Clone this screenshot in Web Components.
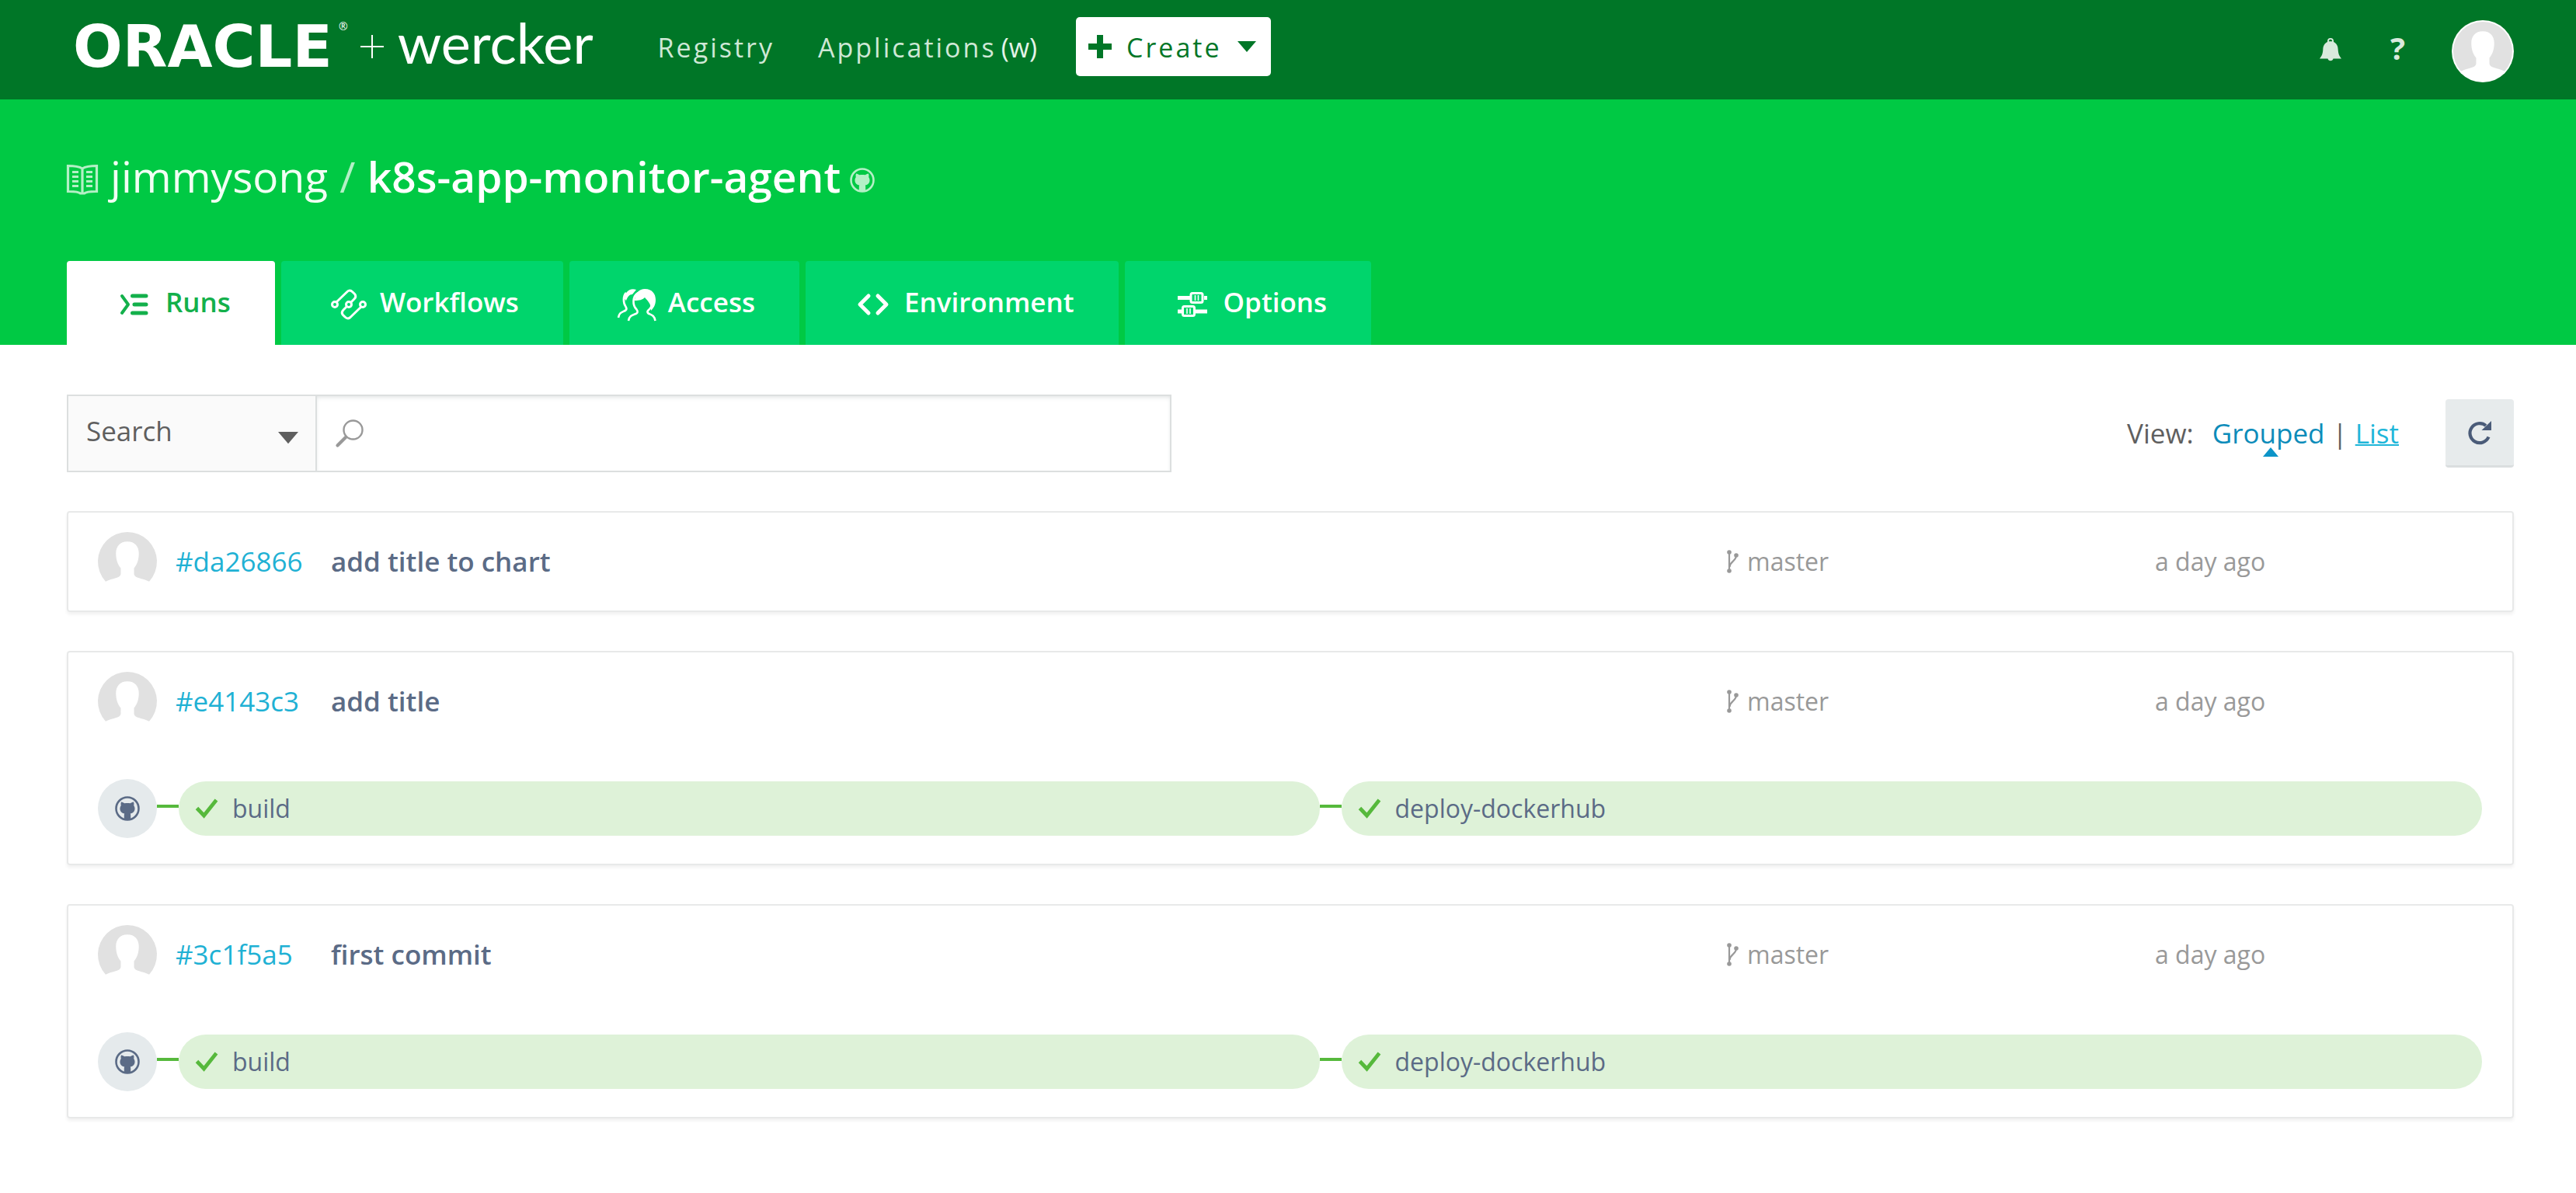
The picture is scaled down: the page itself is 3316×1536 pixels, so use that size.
<!DOCTYPE html>
<html lang="en">
<head>
<meta charset="utf-8">
<title>k8s-app-monitor-agent</title>
<style>
  body { margin: 0; background: #fff; color: #5f5f5f; font: 35px/48px "Open Sans", "Noto Sans", sans-serif; }
</style>
</head>
<body>
<wk-app></wk-app>
<script>
const define = (name, html, setup) => {
  const tpl = document.createElement('template');
  tpl.innerHTML = html;
  customElements.define(name, class extends HTMLElement {
    connectedCallback() {
      if (this.shadowRoot) return;
      const root = this.attachShadow({ mode: 'open' });
      root.append(tpl.content.cloneNode(true));
      if (setup) setup(this, root);
    }
  });
};

const ICONS = {
  plus: ['0 0 30 30', '<path fill="currentColor" d="M11 0h8v11h11v8H19v11h-8V19H0v-8h11z"/>'],
  down: ['0 0 24 14', '<path fill="currentColor" d="M0 0h24L12 14z"/>'],
  bell: ['0 0 28 30', '<path fill="currentColor" fill-rule="evenodd" d="M14 0a4 4 0 0 0-4 4v1C6 7 4.500 10 4.300 15 4 20 3 22.500 0 26.500h10.500a3.600 3.600 0 0 0 7 0H28c-3-4-4-6.500-4.300-11.500C23.500 10 22 7 18 5V4a4 4 0 0 0-4-4zm0 1.800c1.300 0 2.200 1 2.200 2.400h-4.400c0-1.400.9-2.400 2.200-2.400z"/>'],
  book: ['0 0 40 40', '<g fill="none" stroke="currentColor" stroke-width="3.200"><path d="M20 5C15 2 9 1.500 1.500 1.500v33c7 0 13-.2 16 2.500h5c3-2.700 9-2.500 16-2.500v-33C31 1.500 25 2 20 5zM20 5v32"/><path d="M7 9.500h8M7 15.500h8M7 21.500h8M7 27.500h8M25 9.500h8M25 15.500h8M25 21.500h8M25 27.500h8"/></g>'],
  github: ['0 0 32 32', '<circle cx="16" cy="16" r="14.500" fill="none" stroke="currentColor" stroke-width="2.600"/><path fill="currentColor" d="M8 7.500c1.700.2 3.200 1 4.300 1.800 2.400-.5 5-.5 7.400 0C20.800 8.500 22.300 7.700 24 7.500c.6 1.600.6 3.100.2 4.400 2.600 3.600 1.600 9.700-4.400 10.700.3.700.4 1.400.4 2.400v4.800L16 31l-4.200-1.200V25c0-1 .1-1.700.4-2.400-6-1-7-7.100-4.400-10.700-.4-1.300-.4-2.800.2-4.400z"/>'],
  runs: ['0 0 36 28', '<g fill="none" stroke="currentColor" stroke-width="5" stroke-linecap="round"><path d="M2 3l8 11-8 11" stroke-width="4" stroke-linejoin="round"/><path d="M15.500 3H33M18 14h15M15.500 25H33"/></g>'],
  flow: ['0 0 46 40', '<g fill="none" stroke="currentColor" stroke-width="3"><circle cx="5" cy="20" r="3.500"/><circle cx="23" cy="20" r="3.500"/><circle cx="41" cy="20" r="3.500"/><path stroke-linejoin="round" d="M7 17L20.500 4Q24 0 28 4l3 3q2 3-1 6l-4 4M39 23L25.500 36Q22 40 18 36l-3-3q-2-3 1-6l4-4"/></g>'],
  people: ['0 0 50 42', '<g fill="none" stroke="currentColor" stroke-width="2.600"><path d="M14 42c1-7 6-7.500 10.500-9.500 1.500-1 1.500-3 0-5-6-6-5-17 1-21 4-3 12-3 16 2 5 6 4 15-2 20-1.500 1.500-1 3 0 4 4 2 8 2.500 9 9.500"/><path d="M1 38c1-7 5-7 9.500-9.500 1.500-1 1-3-.2-5C7 19 7 10 11 6"/></g><path fill="currentColor" d="M9 14c0-8 6-15 15-12l-5 6c-4 0-6 3-8 8zM22 15c1-9 6-14 13-14 10 0 14 7 14 14s-3 11-6 14c0-10-4-12-8-17-3 3-7 4-13 4z"/>'],
  code: ['0 0 40 28', '<path fill="none" stroke="currentColor" stroke-width="5" stroke-linecap="round" stroke-linejoin="round" d="M14 3L3 14l11 11M26 3l11 11-11 11"/>'],
  sliders: ['0 0 38 32', '<g fill="none" stroke="currentColor"><path stroke-width="5" d="M0 7.500h16M34 7.500h4M0 25h6M22 25h16"/><rect x="17" y="1.500" width="15" height="12" rx="2" stroke-width="3"/><rect x="6.500" y="18.500" width="15" height="12" rx="2" stroke-width="3"/><path stroke-width="1.600" d="M22.500 4v7M26.500 4v7M12 21v7M16 21v7"/></g>'],
  search: ['0 0 36 36', '<g fill="none" stroke="currentColor"><circle cx="22.500" cy="13.500" r="12" stroke-width="2.400"/><path stroke-width="4.200" stroke-linecap="round" d="M2.500 33.500L13 23"/></g>'],
  reload: ['0 0 30 30', '<path fill="none" stroke="currentColor" stroke-width="4.200" d="M26.500 20.500A12.500 12.500 0 1 1 23 6"/><path fill="currentColor" d="M30 0v12H17.500z"/>'],
  branch: ['0 0 15 30', '<g fill="none" stroke="currentColor" stroke-width="2.200"><path d="M3 3v24M12 7c0 8-8 7-8.500 15"/></g><g fill="currentColor"><circle cx="3" cy="3" r="2.800"/><circle cx="3" cy="27" r="2.800"/><circle cx="12" cy="7" r="2.800"/></g>'],
  check: ['0 0 28 26', '<path fill="none" stroke="currentColor" stroke-width="4.800" d="M1.500 12.500l9 9.500L26.500 2"/>'],
  person: ['0 0 80 80', '<path fill="#e1e1e1" d="M10.500 67A40 40 0 1 1 69.500 67C60 62 50 63 49 57v-8c4-5 6.500-11 6.500-20 0-9.500-5.500-16-15.500-16s-15.500 6.500-15.500 16c0 9 2.500 15 6.500 20v8c-1 6-11 5-20.500 10z"/>']
};
define('wk-icon', '<style>:host{display:inline-flex;flex:none}svg{display:block;overflow:visible}</style>', (el, root) => {
  const [box, body] = ICONS[el.getAttribute('name')];
  const [, , w, h] = box.split(' ');
  const size = el.getAttribute('size');
  const width = size || w, height = size ? size * h / w : h;
  root.innerHTML += `<svg viewBox="${box}" width="${width}" height="${height}" aria-hidden="true">${body}</svg>`;
});

define('wk-logo', `<style>
  :host{display:flex;align-items:center;color:#fff;white-space:nowrap}
  .oracle{min-width:342px;font:700 75px/76px "DejaVu Sans",sans-serif}
  sup{align-self:flex-start;font:14px/16px "Open Sans",sans-serif;margin-top:10px}
  .plus{width:30px;height:30px;margin:0 18px 0 16px;background:linear-gradient(#fff,#fff) center/100% 2px no-repeat,linear-gradient(#fff,#fff) center/2px 100% no-repeat}
  .wercker{font:400 72px/76px Lato,sans-serif;padding-bottom:12px}
</style><span class="oracle">ORACLE</span><sup>®</sup><span class="plus"></span><span class="wercker">wercker</span>`);

define('wk-header', `<style>
  :host{display:flex;align-items:center;box-sizing:border-box;height:128px;padding:0 80px 8px 94px;background:#007627}
  nav{display:flex;align-items:center;margin-left:83px;font-size:34px}
  a{color:#cfe8d6;text-decoration:none;letter-spacing:3px;margin-right:56px;padding-top:2px}
  a span{letter-spacing:0;color:#e4f3e8;margin-left:6px}
  a:nth-of-type(2){margin-right:50px}
  button{display:flex;align-items:center;height:76px;padding:0 19px 0 16px;border:0;border-radius:5px;background:#fff;color:#007627;font:inherit;letter-spacing:3px}
  button span{margin:0 20px 0 19px;padding-top:2px}
  .tools{display:flex;align-items:center;margin-left:auto;padding-top:12px;color:#d9eadd}
  .tools button{height:auto;padding:0 0 4px;background:none;color:inherit;letter-spacing:0}
  .tools .help{font-weight:700;font-size:40px;line-height:48px;margin:0 60px 0 63px;padding-bottom:8px}
  .tools .me{border-radius:50%;padding:2px;background:#fff}
</style>
<wk-logo></wk-logo>
<nav><a href="#registry">Registry</a><a href="#apps">Applications<span>(w)</span></a>
<button type="button"><wk-icon name="plus"></wk-icon><span>Create</span><wk-icon name="down"></wk-icon></button></nav>
<div class="tools"><button type="button" aria-label="Notifications"><wk-icon name="bell"></wk-icon></button><button type="button" class="help">?</button><button type="button" class="me" aria-label="Account"><wk-icon name="person" size="76"></wk-icon></button></div>`);

define('wk-tab', `<style>
  :host{display:flex}
  a{display:flex;align-items:center;box-sizing:border-box;height:108px;padding:0 57px 2px 62px;gap:15px;border-radius:4px 4px 0 0;background:#00d56c;color:#fff;font-weight:600;text-decoration:none}
  :host([current]) a{background:#fff;color:#13b04b}
  .icon{display:flex;justify-content:center;width:50px;padding-top:6px}
</style><a href="#"><span class="icon"></span><slot></slot></a>`, (el, root) => {
  root.querySelector('.icon').innerHTML = `<wk-icon name="${el.getAttribute('icon')}"></wk-icon>`;
});

define('wk-banner', `<style>
  :host{display:block;padding:61px 80px 0 86px;background:#00c944;color:#fff}
  h1{display:flex;align-items:center;height:76px;margin:0 0 71px;font-size:55px;font-weight:400;line-height:76px;white-space:pre}
  h1 wk-icon{color:#b4f0c6;padding-top:10px}
  a{color:#f1fff4;text-decoration:none}
  .owner{margin-left:16px}
  .sep{color:#b4f0c6;padding:0 1px}
  .repo{font-weight:600;margin-right:12px;color:#fff}
  nav{display:flex;gap:8px}
</style>
<h1><wk-icon name="book"></wk-icon><a class="owner" href="#owner">jimmysong</a><span class="sep"> / </span><a class="repo" href="#repo">k8s-app-monitor-agent</a><wk-icon name="github"></wk-icon></h1>
<nav><wk-tab icon="runs" current>Runs</wk-tab><wk-tab icon="flow">Workflows</wk-tab><wk-tab icon="people">Access</wk-tab><wk-tab icon="code">Environment</wk-tab><wk-tab icon="sliders">Options</wk-tab></nav>`);

define('wk-toolbar', `<style>
  :host{display:flex;align-items:center;justify-content:space-between}
  .search{display:flex;box-sizing:border-box;flex:0 1 1422px;height:100px;border:2px solid #dcdfdf}
  .kind{display:flex;align-items:center;width:320px;box-sizing:border-box;padding-right:22px;border-right:2px solid #dcdfdf;background:#fafafa;color:#5f5f5f}
  .kind wk-icon{padding-top:12px}
  select{flex:1;height:96px;padding:0 0 6px 23px;border:0;background:none;color:inherit;font:inherit;appearance:none}
  .query{display:flex;align-items:center;flex:1;padding-left:24px;gap:20px;color:#999;box-shadow:inset 0 3px 6px -2px #dcdfdf}
  input{flex:1;min-width:0;height:80px;border:0;outline:0;background:none;font:inherit}
  .view{display:flex;align-items:center;white-space:pre}
  .view a{color:#1fb6d9}
  .view a.on{position:relative;color:#0c8cba;text-decoration:none;margin:0 10px 0 24px}
  .on::after{content:"";position:absolute;left:calc(50% - 7px);bottom:-6px;border:10px solid transparent;border-top:0;border-bottom:12px solid #0c94c8}
  .view a.list{margin:0 60px 0 10px;text-decoration-thickness:2px}
  button{display:flex;align-items:center;justify-content:center;width:88px;height:88px;padding:0;border:0;border-bottom:3px solid #dadedf;border-radius:4px;background:#e7ebec;color:#4a5b78}
</style>
<div class="search"><span class="kind"><select aria-label="Search by"><option>Search</option></select><wk-icon name="down" size="26"></wk-icon></span>
<label class="query"><wk-icon name="search"></wk-icon><input type="text" aria-label="Search"></label></div>
<div class="view"><span>View:</span><a class="on" href="#grouped">Grouped</a><span>|</span><a class="list" href="#list">List</a><button type="button" aria-label="Refresh"><wk-icon name="reload"></wk-icon></button></div>`);

define('wk-stage', `<style>
  :host{display:flex;align-items:center;flex:1}
  .link{width:28px;height:4px;margin-bottom:6px;background:#56b93c}
  .pill{display:flex;align-items:center;flex:1;box-sizing:border-box;height:70px;padding-left:22px;gap:19px;border-radius:35px;background:#def2d8;color:#56b93c}
  .name{color:#5b6b86;font-size:32px}
</style><span class="link"></span><div class="pill"><wk-icon name="check"></wk-icon><span class="name"><slot></slot></span></div>`);

define('wk-run', `<style>
  :host{display:block;padding:25px 39px 25px 38px;border:2px solid #e8e9e9;border-radius:4px;box-shadow:0 3px 4px rgba(0,0,0,.06)}
  .row{display:grid;grid-template-columns:100px 200px 1fr 551px 421px;align-items:center;height:76px}
  .hash{color:#1fb1d4;text-decoration:none}
  .msg{color:#5b6b86;font-weight:600}
  .meta{display:flex;align-items:center;gap:11px;font-size:32px;color:#999}
  .stages{display:none;align-items:center;margin:62px 0 8px}
  :host([staged]) .stages{display:flex}
  .src{display:flex;align-items:center;justify-content:center;width:76px;height:76px;border-radius:50%;background:#e5eaec;color:#5b6b86}
</style>
<div class="row"><wk-icon name="person" size="76"></wk-icon><a class="hash" href="#run"></a><span class="msg"></span><span class="meta"><wk-icon name="branch"></wk-icon><span class="branch"></span></span><span class="meta when"></span></div>
<div class="stages"><span class="src"><wk-icon name="github"></wk-icon></span><slot></slot></div>`, (el, root) => {
  for (const k of ['hash', 'msg', 'branch', 'when']) root.querySelector('.' + k).textContent = el.getAttribute(k);
});

define('wk-app', `<style>
  :host{display:block}
  main{display:flex;flex-direction:column;gap:50px;padding:64px 80px 50px 86px}
</style>
<wk-header></wk-header><wk-banner></wk-banner>
<main><wk-toolbar></wk-toolbar>
<wk-run hash="#da26866" msg="add title to chart" branch="master" when="a day ago"></wk-run>
<wk-run staged hash="#e4143c3" msg="add title" branch="master" when="a day ago"><wk-stage>build</wk-stage><wk-stage>deploy-dockerhub</wk-stage></wk-run>
<wk-run staged hash="#3c1f5a5" msg="first commit" branch="master" when="a day ago"><wk-stage>build</wk-stage><wk-stage>deploy-dockerhub</wk-stage></wk-run>
</main>`);
</script>
</body>
</html>
